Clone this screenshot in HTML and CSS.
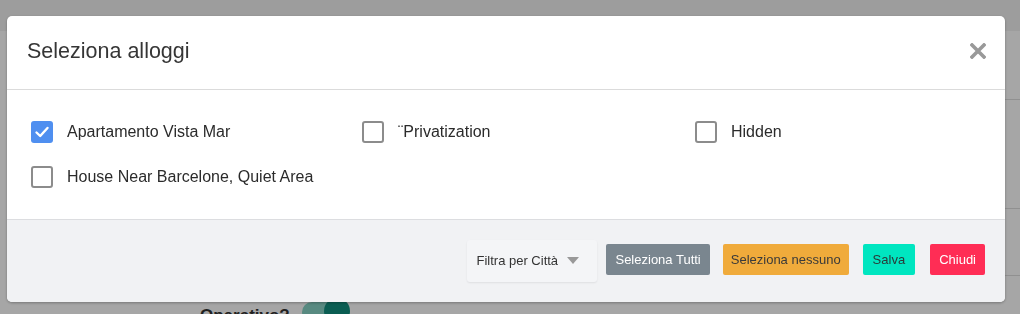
FILE: index.html
```html
<!DOCTYPE html>
<html>
<head>
    <title>Seleziona alloggi</title>
    <link rel="stylesheet" href="styles.css">
</head>
<body>
    <div class="page">
        <div class="topbar"></div>
        <div class="page-row row-a"></div>
        <div class="page-row row-b"></div>
        <div class="page-row row-c"></div>
        <div class="page-row row-d">
            <span class="page-label">Operativo?</span>
            <span class="toggle"><span class="knob"></span></span>
        </div>
    </div>

    <div class="overlay"></div>

    <div class="modal">
        <div class="modal-header">
            <h2 class="modal-title">Seleziona alloggi</h2>
            <button class="close" aria-label="Chiudi">
                <svg width="16" height="16" viewBox="0 0 16 16">
                    <path d="M2 2 L14 14 M14 2 L2 14" stroke="#999" stroke-width="3.6" stroke-linecap="square"/>
                </svg>
            </button>
        </div>

        <div class="modal-body">
            <label class="check">
                <span class="box checked">
                    <svg width="22" height="22" viewBox="0 0 22 22">
                        <path d="M5.5 11.5 L9.2 15 L16.5 7" fill="none" stroke="#fff" stroke-width="2.4" stroke-linecap="round" stroke-linejoin="round"/>
                    </svg>
                </span>
                Apartamento Vista Mar
            </label>
            <label class="check"><span class="box"></span>¨Privatization</label>
            <label class="check"><span class="box"></span>Hidden</label>
            <label class="check"><span class="box"></span>House Near Barcelone, Quiet Area</label>
        </div>

        <div class="modal-footer">
            <div class="filter">
                Filtra per Città
                <span class="caret"></span>
            </div>
            <button class="btn btn-grey">Seleziona Tutti</button>
            <button class="btn btn-orange">Seleziona nessuno</button>
            <button class="btn btn-teal">Salva</button>
            <button class="btn btn-red">Chiudi</button>
        </div>
    </div>
</body>
</html>
```

FILE: styles.css
```css
body {
    margin: 0;
    font-family: "Liberation Sans", Arial, sans-serif;
    background: #fff;
    overflow: hidden;
    height: 314px;
}

/* page behind the modal */
.page {
    height: 314px;
}
.topbar {
    height: 31px;
    background: #f2f2f2;
}
.page-row {
    margin-left: 20px;
    border-bottom: 1px solid #dedede;
}
.row-a { height: 68px; }
.row-b { height: 108px; }
.row-c { height: 66px; }
.row-d {
    display: flex;
    align-items: flex-start;
    gap: 12px;
    padding: 30px 0 0 180px;
}
.page-label {
    font-weight: bold;
    font-size: 17px;
    color: #333;
}
.toggle {
    position: relative;
    display: inline-block;
    width: 38px;
    height: 20px;
    margin-top: -4px;
    border-radius: 10px;
    background: #88d4c6;
}
.toggle .knob {
    position: absolute;
    right: -10px;
    top: -4px;
    width: 26px;
    height: 26px;
    border-radius: 50%;
    background: #10907f;
}

.overlay {
    position: fixed;
    inset: 0;
    background: rgba(0, 0, 0, 0.35);
}

/* modal */
.modal {
    position: fixed;
    left: 7px;
    top: 16px;
    width: 998px;
    height: 286px;
    background: #fff;
    border-radius: 5px;
    box-shadow: 0 1px 3px rgba(0, 0, 0, 0.3);
    overflow: hidden;
    display: flex;
    flex-direction: column;
}

.modal-header {
    height: 74px;
    box-sizing: border-box;
    border-bottom: 1px solid #dbdbdb;
    display: flex;
    align-items: center;
    justify-content: space-between;
    padding: 0 19px 0 20px;
}
.modal-title {
    margin: 0;
    font-weight: normal;
    font-size: 21.5px;
    color: #363636;
    padding-bottom: 2px;
}
.close {
    border: none;
    background: none;
    padding: 0;
    width: 16px;
    height: 16px;
    cursor: pointer;
    margin-bottom: 4px;
}
.close svg { display: block; }

.modal-body {
    height: 129px;
    box-sizing: border-box;
    padding: 20px 0 0 24px;
    display: grid;
    grid-template-columns: 331px 333px 1fr;
    grid-auto-rows: 44.5px;
}
.check {
    display: flex;
    align-items: center;
    gap: 14px;
    font-size: 16px;
    color: #2b2b2b;
    cursor: pointer;
    white-space: nowrap;
}
.box {
    width: 22px;
    height: 22px;
    box-sizing: border-box;
    border: 2px solid #8c8c8c;
    border-radius: 3px;
    flex-shrink: 0;
}
.box.checked {
    border: none;
    background: #4f8ff0;
}
.box svg { display: block; }

.modal-footer {
    flex: 1;
    background: #f1f2f4;
    border-top: 1px solid #dcdde0;
    display: flex;
    align-items: center;
    justify-content: flex-end;
    padding: 0 20px 3px 0;
}
.filter {
    width: 130px;
    height: 42px;
    box-sizing: border-box;
    display: flex;
    align-items: center;
    padding-left: 9px;
    background: #f4f5f7;
    border-radius: 3px;
    box-shadow: 0 1px 2px rgba(0, 0, 0, 0.08);
    font-size: 13px;
    color: #333;
    margin-right: 9px;
    margin-top: 2px;
}
.caret {
    margin-left: 9px;
    width: 0;
    height: 0;
    border-left: 6.5px solid transparent;
    border-right: 6.5px solid transparent;
    border-top: 7px solid #999;
}
.btn {
    height: 31px;
    border: none;
    border-radius: 2px;
    font-family: inherit;
    font-size: 13px;
    padding: 0 9px;
    cursor: pointer;
}
.btn-grey { background: #7a868f; color: #fff; }
.btn-orange { background: #f0ab3b; color: #3a3a3a; padding: 0 8px; margin-left: 13px; }
.btn-teal { background: #00e6c0; color: #2a3a38; padding: 0 10px; margin-left: 14px; }
.btn-red { background: #ff2d55; color: #fff; margin-left: 15px; }
```
